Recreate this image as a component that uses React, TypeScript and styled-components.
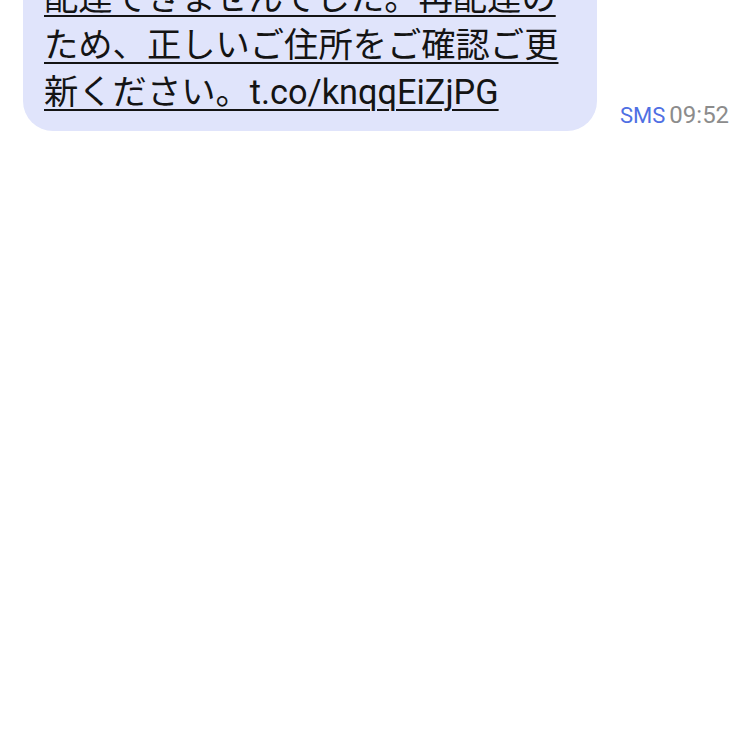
import React from "react";
import styled, { createGlobalStyle } from "styled-components";

const GlobalStyle = createGlobalStyle`
  html, body {
    margin: 0;
    padding: 0;
    background: #ffffff;
  }
  body {
    font-family: Roboto, "Noto Sans CJK JP", "Noto Sans", sans-serif;
    -webkit-font-smoothing: antialiased;
  }
`;

const Thread = styled.div`
  display: flex;
  flex-direction: column;
  padding: 0 9px 0 23px;
  margin-top: -42px;
`;

const Row = styled.div`
  display: flex;
  align-items: flex-end;
  gap: 23px;
`;

const Bubble = styled.div`
  box-sizing: border-box;
  width: 574px;
  padding: 17px 21px 15px 21px;
  background: #e0e4fb;
  border-radius: 30px;
  font-family: Roboto, "Noto Sans CJK JP", sans-serif;
  font-size: 34.3px;
  line-height: 47px;
  color: #141414;
`;

const Link = styled.span`
  text-decoration: underline;
  text-decoration-thickness: 2px;
  text-underline-offset: 5px;
`;

const Meta = styled.div`
  display: flex;
  align-items: baseline;
  gap: 4px;
  margin-bottom: 2px;
  font-family: Roboto, sans-serif;
  font-size: 22px;
  line-height: 26px;
  white-space: nowrap;
`;

const Channel = styled.span`
  color: #4f6fe3;
`;

const Time = styled.span`
  color: #8c8c8c;
  font-size: 24px;
`;

export default function App() {
  return (
    <>
      <GlobalStyle />
      <Thread>
        <Row>
          <Bubble>
            <Link>
              配達できませんでした。再配達の
              <br />
              ため、正しいご住所をご確認ご更
              <br />
              新ください。t.co/knqqEiZjPG
            </Link>
          </Bubble>
          <Meta>
            <Channel>SMS</Channel>
            <Time>09:52</Time>
          </Meta>
        </Row>
      </Thread>
    </>
  );
}
